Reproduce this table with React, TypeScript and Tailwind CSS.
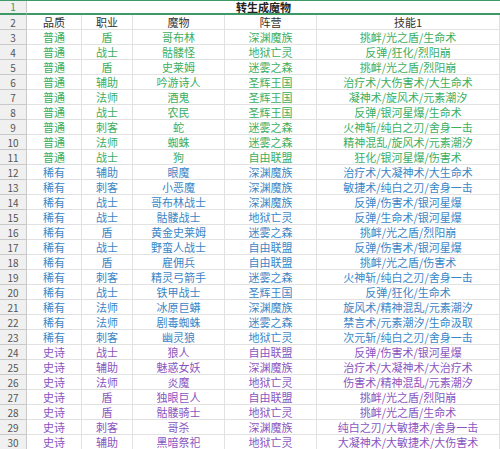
import React from "react";

type Row = [string, string, string, string, string];

const rows: Row[] = [
  ["普通", "盾", "哥布林", "深渊魔族", "挑衅/光之盾/生命术"],
  ["普通", "战士", "骷髅怪", "地狱亡灵", "反弹/狂化/烈阳崩"],
  ["普通", "盾", "史莱姆", "迷雾之森", "挑衅/光之盾/烈阳崩"],
  ["普通", "辅助", "吟游诗人", "圣辉王国", "治疗术/大伤害术/大生命术"],
  ["普通", "法师", "酒鬼", "圣辉王国", "凝神术/旋风术/元素潮汐"],
  ["普通", "战士", "农民", "圣辉王国", "反弹/银河星爆/生命术"],
  ["普通", "刺客", "蛇", "迷雾之森", "火神斩/纯白之刃/舍身一击"],
  ["普通", "法师", "蜘蛛", "迷雾之森", "精神混乱/旋风术/元素潮汐"],
  ["普通", "战士", "狗", "自由联盟", "狂化/银河星爆/伤害术"],
  ["稀有", "辅助", "眼魔", "深渊魔族", "治疗术/大凝神术/大生命术"],
  ["稀有", "刺客", "小恶魔", "深渊魔族", "敏捷术/纯白之刃/舍身一击"],
  ["稀有", "战士", "哥布林战士", "深渊魔族", "反弹/伤害术/银河星爆"],
  ["稀有", "战士", "骷髅战士", "地狱亡灵", "反弹/生命术/银河星爆"],
  ["稀有", "盾", "黄金史莱姆", "迷雾之森", "挑衅/光之盾/烈阳崩"],
  ["稀有", "战士", "野蛮人战士", "自由联盟", "反弹/伤害术/银河星爆"],
  ["稀有", "盾", "雇佣兵", "自由联盟", "挑衅/光之盾/伤害术"],
  ["稀有", "刺客", "精灵弓箭手", "迷雾之森", "火神斩/纯白之刃/舍身一击"],
  ["稀有", "战士", "铁甲战士", "圣辉王国", "反弹/狂化/生命术"],
  ["稀有", "法师", "冰原巨蟒", "深渊魔族", "旋风术/精神混乱/元素潮汐"],
  ["稀有", "法师", "剧毒蜘蛛", "迷雾之森", "禁言术/元素潮汐/生命汲取"],
  ["稀有", "刺客", "幽灵狼", "地狱亡灵", "次元斩/纯白之刃/舍身一击"],
  ["史诗", "战士", "狼人", "自由联盟", "反弹/伤害术/银河星爆"],
  ["史诗", "辅助", "魅惑女妖", "深渊魔族", "治疗术/大凝神术/大治疗术"],
  ["史诗", "法师", "炎魔", "地狱亡灵", "伤害术/精神混乱/元素潮汐"],
  ["史诗", "盾", "独眼巨人", "自由联盟", "挑衅/光之盾/烈阳崩"],
  ["史诗", "盾", "骷髅骑士", "地狱亡灵", "挑衅/光之盾/生命术"],
  ["史诗", "刺客", "哥杀", "深渊魔族", "纯白之刃/大敏捷术/舍身一击"],
  ["史诗", "辅助", "黑暗祭祀", "地狱亡灵", "大凝神术/大敏捷术/大伤害术"],
];

function colorFor(q: string) {
  if (q === "普通") return "text-[#3aae5f]";
  if (q === "稀有") return "text-[#3a86c6]";
  return "text-[#8a55c0]";
}

const cell = "h-[15px] leading-[15px] text-center border-r border-b border-[#e2e2e2] overflow-hidden whitespace-nowrap";
const num = "h-[15px] leading-[15px] text-center border-r border-b border-[#c9c9c9] bg-[#f0f0f0] text-[#555] text-[10px]";

export default function App() {
  return (
    <div
      className="w-[500px] h-[449px] overflow-hidden bg-white text-[11px]"
      style={{ fontFamily: '"Noto Sans CJK SC", "Noto Sans", sans-serif' }}
    >
      <div className="grid grid-cols-[27px_55px_51px_92px_92px_183px] border-t border-[#3d9a66]">
        <div className="h-[14px] leading-[12px] text-center bg-[#f0f0f0] text-[#3a9a62] text-[10px] border-r border-[#c9c9c9] border-b-2 border-b-[#3d9a66]">1</div>
        <div className="col-span-5 h-[14px] leading-[12px] text-center font-bold text-[#222] border-b-2 border-[#3d9a66]">转生成魔物</div>

        <div className={num}>2</div>
        {["品质", "职业", "魔物", "阵营", "技能1"].map((h) => (
          <div key={h} className={`${cell} text-[#333]`}>{h}</div>
        ))}

        {rows.map((r, i) => (
          <React.Fragment key={i}>
            <div className={num}>{i + 3}</div>
            {r.map((c, j) => (
              <div key={j} className={`${cell} ${colorFor(r[0])}`}>{c}</div>
            ))}
          </React.Fragment>
        ))}
      </div>
    </div>
  );
}
